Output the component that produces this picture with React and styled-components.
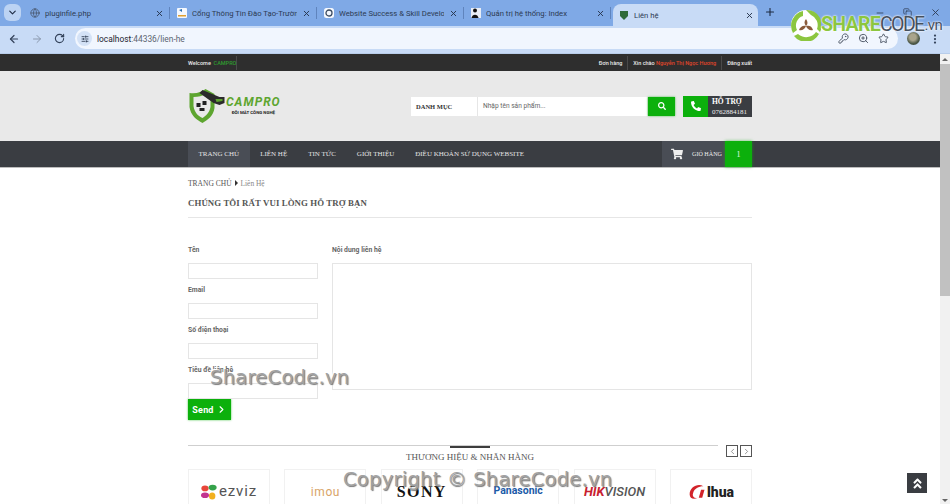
import React from "react";
import styled, { createGlobalStyle } from "styled-components";
import { ChevronDown, X, Plus, Minus, ArrowLeft, ArrowRight, RotateCw, Star, ZoomIn, KeyRound, MoreVertical, Globe, SlidersHorizontal, Copy, ChevronLeft, ChevronRight } from "lucide-react";
import { FaPhoneAlt, FaSearch, FaShoppingCart, FaAngleDoubleUp } from "react-icons/fa";

const GREEN = "#0cb00c";
const DARK = "#3a3d42";
const SERIF = `"Liberation Serif", serif`;
const SANS = `Roboto, "Liberation Sans", sans-serif`;

const Global = createGlobalStyle`
  html, body { margin: 0; padding: 0; height: 504px; overflow: hidden; background: #fff; }
  * { box-sizing: border-box; }
  #root { height: 504px; font-family: ${SANS}; }
`;

// ─── browser chrome ───

const Frame = styled.div`
  position: relative; width: 950px; height: 504px; overflow: hidden;
  display: flex; flex-direction: column;
`;
const TabStrip = styled.div`
  height: 26px; background: #7fa9e6; display: flex; align-items: flex-end;
  padding-left: 4px; flex: none;
`;
const TabMenu = styled.div`
  width: 17px; height: 17px; margin: 0 2px 5px 0; border-radius: 6px; background: #bcd3f3;
  display: flex; align-items: center; justify-content: center; color: #1f2d45; flex: none;
`;
const Tab = styled.div`
  width: ${({ $active }) => ($active ? "145px" : "147px")};
  height: ${({ $active }) => ($active ? "22px" : "26px")};
  margin-left: ${({ $active }) => ($active ? "2px" : "0")};
  padding: ${({ $active }) => ($active ? "0 4px 0 6px" : "0 6px 0 7px")};
  border-radius: 8px 8px 0 0;
  background: ${({ $active }) => ($active ? "#c8dbf6" : "transparent")};
  display: flex; align-items: center; gap: 5px; color: #26354d; flex: none;
  font-size: 7.7px;
`;
const TabTitle = styled.span`
  flex: 1; white-space: nowrap; overflow: hidden; color: #2c3a52;
`;
const TabGap = styled.span`
  width: 1px; height: 12px; margin-bottom: 7px; background: #5f84bd; flex: none; margin-left: -1px;
`;
const Favicon = styled.span`
  width: 10px; height: 10px; flex: none; display: flex; align-items: center; justify-content: center;
  color: #4a5a72;
`;
const NewTab = styled.div`
  margin: 0 0 5px 3px; width: 18px; height: 18px; display: flex; align-items: center; justify-content: center;
  color: #1d2a40;
`;
const WindowButtons = styled.div`
  margin-left: auto; padding: 0 9px 8px 0; display: flex; align-items: center; gap: 18px; color: #2f3d55;
`;
const Toolbar = styled.div`
  height: 28px; flex: none; background: #c8dbf6; border-bottom: 1px solid #b8cdea;
  display: flex; align-items: center; padding: 0 9px 2px 8px; gap: 11px; color: #33425a;
`;
const Address = styled.div`
  width: 823px; flex: none; height: 21px; margin-left: -1px; border-radius: 11px; background: #f1f6fe;
  display: flex; align-items: center; padding: 0 9px 0 2px; font-size: 8.4px; color: #5c6470; gap: 5px;
`;
const SiteInfo = styled.span`
  width: 15px; height: 15px; border-radius: 50%; background: #d4e2f6;
  display: flex; align-items: center; justify-content: center; color: #2f3c52;
`;
const Host = styled.span` color: #1c2431; `;
const AddressActions = styled.div`
  margin-left: auto; display: flex; align-items: center; gap: 9px; color: #46505f;
`;
const Avatar = styled.span`
  width: 13px; height: 13px; border-radius: 50%; flex: none; margin: 0 -2px 0 -2px;
  background: radial-gradient(circle at 45% 40%, #a9a48c 0 30%, #4f5a48 60%, #2d3a33 100%);
`;

// ─── page ───

const Viewport = styled.div`
  flex: 1; display: flex; min-height: 0;
`;
const Page = styled.div`
  width: 940px; flex: none; overflow: hidden; background: #fff;
`;
const Wrap = styled.div`
  width: 564px; margin: 0 auto; display: flex; align-items: center; height: 100%;
`;
const TopBar = styled.div`
  height: 17px; background: #2e2e2e; font-size: 5.5px; font-weight: 500; color: #e8e8e8;
`;
const TopCell = styled.span`
  display: flex; align-items: center; height: 14px; padding: 0 5px;
  border-right: ${({ $sep }) => ($sep ? "1px solid #4a4a4a" : "none")};
  &:first-child { padding-left: 0; }
  &:last-child { padding-right: 0; }
  white-space: pre;
`;
const TopLeft = styled.div` display: flex; align-items: center; `;
const TopRight = styled.div` margin-left: auto; display: flex; align-items: center; `;
const Accent = styled.span` color: ${({ $c }) => $c}; `;

const Header = styled.div`
  height: 70px; background: #e9e9e9;
`;
const LogoBox = styled.div`
  width: 223px; display: flex; align-items: center; gap: 1px;
`;
const LogoText = styled.div` display: flex; flex-direction: column; align-items: center; margin-top: -1px; `;
const LogoName = styled.div`
  font: italic 700 12px/12px ${SANS}; color: #5da52f; letter-spacing: 1px;
`;
const LogoTag = styled.div`
  margin-top: 1px; font: 700 4.4px/7px ${SANS}; color: #222;
`;
const Search = styled.div`
  width: 236px; height: 19px; background: #fff; display: flex; align-items: center;
`;
const SearchCat = styled.div`
  width: 67px; height: 100%; border-right: 1px solid #e6e6e6; padding-left: 5px;
  display: flex; align-items: center; font: 700 6.5px ${SERIF}; color: #333;
`;
const SearchHint = styled.div` padding-left: 5px; font-size: 6.6px; color: #666; `;
const SearchBtn = styled.div`
  width: 27px; height: 19px; margin-left: 1px; background: ${GREEN}; color: #fff;
  box-shadow: 0 0 2px rgba(12,176,12,.7);
  display: flex; align-items: center; justify-content: center;
`;
const Support = styled.div`
  margin-left: 8px; display: flex; height: 21px;
`;
const SupportIcon = styled.div`
  width: 25px; background: ${GREEN}; color: #fff;
  display: flex; align-items: center; justify-content: center;
`;
const SupportText = styled.div`
  width: 44px; background: ${DARK}; padding: 1px 0 0 4px; color: #eee; font-family: ${SERIF};
`;
const SupportTitle = styled.div` font: 700 7.5px/10px ${SERIF}; color: #fff; `;
const SupportPhone = styled.div` font: 7px/10px ${SERIF}; `;

const Nav = styled.div`
  height: 27px; background: ${DARK}; border-bottom: 1px solid #bdbdbd;
`;
const NavItem = styled.div`
  height: 100%; padding: 0 10.5px; display: flex; align-items: center;
  font: 7px ${SERIF}; color: #e4e4e4; white-space: nowrap;
  background: ${({ $active }) => ($active ? "#494d55" : "transparent")};
`;
const Cart = styled.div`
  margin-left: auto; width: 63px; height: 100%; background: #494d55; color: #eee;
  display: flex; align-items: center; padding-left: 9px; gap: 9px;
  font: 6.1px ${SERIF}; white-space: nowrap;
`;
const CartCount = styled.div`
  width: 27px; height: 100%; background: ${GREEN}; color: #e6ffe6;
  box-shadow: 0 0 3px rgba(12,176,12,.6);
  display: flex; align-items: center; justify-content: center; font: 8px ${SERIF};
`;

const Main = styled.div` width: 564px; margin: 0 auto; `;
const Crumbs = styled.div`
  padding-top: 10px; height: 20px; display: flex; align-items: center; gap: 3px;
  font: 7.5px ${SERIF}; color: #555;
`;
const CrumbArrow = styled.span`
  width: 0; height: 0; border-left: 3px solid #333; border-top: 3px solid transparent; border-bottom: 3px solid transparent;
`;
const CrumbNow = styled.span` color: #888; font-size: 7.4px; `;
const Heading = styled.h1`
  margin: 0; padding-top: 8px; height: 30px; border-bottom: 1px solid #e6e6e6;
  font: 700 8.8px/14px ${SERIF}; color: #555; letter-spacing: .1px;
`;
const FormGrid = styled.div`
  margin-top: 21px; display: grid; grid-template-columns: 130px 420px; column-gap: 14px; align-items: start;
`;
const Field = styled.div` display: flex; flex-direction: column; `;
const Label = styled.label`
  height: 24px; padding-top: 7px; font: 700 6.8px/9px ${SANS}; color: #666;
`;
const Input = styled.div`
  height: 16px; background: #fff; border: 1px solid #e5e5e5;
`;
const TextArea = styled.div`
  height: 127px; background: #fff; border: 1px solid #e5e5e5;
`;
const SendBtn = styled.div`
  width: 43px; height: 21px; background: ${GREEN}; color: #fff;
  box-shadow: 0 0 2px rgba(12,176,12,.7);
  display: flex; align-items: center; justify-content: center; gap: 2px;
  font: 700 9px ${SANS}; letter-spacing: .2px;
`;
const BrandHead = styled.div`
  margin-top: 25px; height: 24px; display: grid;
`;
const BrandRule = styled.div`
  grid-area: 1 / 1; display: flex; align-items: flex-start; gap: 8px;
`;
const RuleLine = styled.div` flex: 1; border-top: 1px solid #cfcfcf; `;
const ArrowBtn = styled.div`
  width: 12px; height: 12px; border: 1px solid #555; color: #777; background: #fff;
  display: flex; align-items: center; justify-content: center;
  & + & { margin-left: -6px; }
`;
const BrandTitle = styled.div`
  grid-area: 1 / 1; justify-self: center; display: flex; flex-direction: column; align-items: center;
  font: 9px/11px ${SERIF}; color: #555;
  &::before { content: ""; width: 40px; height: 2px; margin: 1px 0 4px; background: #3d3d3d; }
`;
const BrandRow = styled.div`
  display: grid; grid-template-columns: repeat(6, 82px); justify-content: space-between;
`;
const BrandCard = styled.div`
  height: 44px; border: 1px solid #f1f1f1; background: #fff;
  display: flex; align-items: center; justify-content: center; gap: 2px; padding-top: 1px;
`;
const BrandName = styled.span`
  font-family: ${({ $serif }) => ($serif ? SERIF : SANS)};
  font-size: ${({ $size }) => $size}px;
  font-weight: ${({ $weight }) => $weight || 700};
  font-style: ${({ $italic }) => ($italic ? "italic" : "normal")};
  color: ${({ $color }) => $color};
  letter-spacing: ${({ $track }) => $track || 0}px;
  line-height: 1;
`;

const Scrollbar = styled.div`
  width: 10px; flex: none; background: #f1f1f1; display: flex; flex-direction: column; align-items: center;
`;
const ScrollUp = styled.div`
  margin: 4px 0 3px; width: 0; height: 0;
  border-left: 3px solid transparent; border-right: 3px solid transparent; border-bottom: 3px solid #666;
`;
const ScrollThumb = styled.div` width: 100%; height: 232px; background: #c1c1c1; `;
const ScrollDown = styled.div`
  margin-top: auto; margin-bottom: 2px; width: 0; height: 0;
  border-left: 3px solid transparent; border-right: 3px solid transparent; border-top: 3px solid #666;
`;
const BackTop = styled.div`
  position: absolute; left: 907px; top: 473px; width: 20px; height: 20px; background: ${DARK}; color: #fff;
  display: flex; align-items: center; justify-content: center;
`;

// ─── watermarks ───

const Mark = styled.div`
  position: absolute; left: ${({ $x }) => $x}px; top: ${({ $y }) => $y}px;
  font: 19.5px/24px "DejaVu Sans", sans-serif; color: #a2a2a2; white-space: nowrap; letter-spacing: .25px;
  text-shadow: 1px 1px 1px #777, -1px -1px 0 #fff;
`;
const SiteLogo = styled.div`
  position: absolute; left: 791px; top: 9px; display: flex; align-items: center;
  font: 19.5px/32px ${SANS}; letter-spacing: -.7px; white-space: nowrap;
  text-shadow: 0 0 2px #fff, 0 0 2px #fff;
`;
const LogoShare = styled.span` font-weight: 700; color: #8cc63f; `;
const LogoCode = styled.span` font-weight: 400; color: #46505e; letter-spacing: -1.6px; `;
const LogoVn = styled.span` font-weight: 400; color: #46505e; font-size: 15px; margin-left: 1px; `;

// ─── drawings ───

const ShieldLogo = () => (
  <svg width="37" height="36" viewBox="0 0 36 36">
    <path d="M1 5 C8 6 13 4 17 1 L26 6 L26 20 C25 28 19 32 14 35 C8 32 2 27 1 19 Z" fill="#5da52f" />
    <path d="M5 9 C10 9 14 8 17 6 L22 10 L22 19 C21 25 17 28 14 30 C10 28 6 25 5 18 Z" fill="#e9e9e9" />
    <path d="M11 5 L14 2 L31 9 L36 9 L36 15 L31 17 L25 15 Z" fill="#2b2b2b" />
    <path d="M27 11 L34 11 L34 13 L28 14 Z" fill="#5da52f" />
    <path d="M8 15 h4 v4 h-4z M14 13 h4 v4 h-4z M11 20 h5 v3 h-5z" fill="#222" />
  </svg>
);
const ShareCodeMark = () => (
  <svg width="30" height="32" viewBox="0 0 30 32">
    <circle cx="15" cy="16" r="15" fill="#fff" />
    <path d="M15 1 L20 6 A11 11 0 0 1 26 20 L29 23 A15 15 0 0 0 15 1Z M25 23 A12 12 0 0 1 7 25 L3 27 A15 15 0 0 0 28 25Z M2 24 A15 15 0 0 1 12 2 L12 7 A10 10 0 0 0 6 21Z" fill="#8cc63f" />
    <path d="M15 10 C17 13 17 15 15 17 C13 15 13 12 15 10Z M15 17 C18 16 21 17 22 21 C19 22 16 20 15 17Z M15 17 C14 20 11 22 8 21 C9 18 12 16 15 17Z" fill="#8a5a3a" />
  </svg>
);
const EzvizMark = () => (
  <svg width="16" height="16" viewBox="0 0 20 20">
    <ellipse cx="5" cy="5.5" rx="4.5" ry="3.5" fill="#e8463a" />
    <ellipse cx="14.5" cy="4.5" rx="5" ry="3.5" fill="#35a24a" />
    <ellipse cx="5" cy="14" rx="5" ry="3.5" fill="#c2348f" />
    <ellipse cx="14" cy="15" rx="4" ry="4.5" fill="#f2b01e" />
  </svg>
);
const DahuaMark = () => (
  <svg width="17" height="16" viewBox="0 0 14 14">
    <path d="M13 2 C8 -1 1 3 1 9 C1 13 5 14 8 12 C5 13 3 11 4 8 C5 4 9 2 13 2Z" fill="#d2232a" />
    <path d="M11 5 L9 12 L12 12 L14 5Z" fill="#d2232a" />
  </svg>
);
const SchoolIcon = () => (
  <svg width="10" height="10" viewBox="0 0 10 10">
    <rect width="10" height="10" rx="1" fill="#f4f8fe" />
    <path d="M2 2 L5 1 L5 4 Z" fill="#2a6db0" />
    <path d="M1 7 H9 V8.5 H1Z" fill="#e0a030" />
  </svg>
);
const SkillIcon = () => (
  <svg width="10" height="10" viewBox="0 0 10 10">
    <rect width="10" height="10" rx="2.5" fill="#f4f8fe" />
    <circle cx="5" cy="5" r="3" fill="none" stroke="#3a4a5f" strokeWidth="1.3" />
  </svg>
);
const AdminIcon = () => (
  <svg width="10" height="10" viewBox="0 0 10 10">
    <rect width="10" height="10" fill="#e9eef6" />
    <circle cx="4" cy="2.5" r="2" fill="#111" />
    <path d="M0.5 10 C1 5.5 7 5.5 7.5 10Z" fill="#111" />
  </svg>
);

const tabs = [
  { title: "pluginfile.php", icon: <Globe size={10} /> },
  { title: "Cổng Thông Tin Đào Tạo-Trường", icon: <SchoolIcon /> },
  { title: "Website Success & Skill Develop", icon: <SkillIcon /> },
  { title: "Quản trị hệ thống: Index", icon: <AdminIcon /> },
];

const fields = ["Tên", "Email", "Số điện thoại", "Tiêu đề liên hệ"];

const App = () => (
  <Frame>
    <Global />
    <TabStrip>
      <TabMenu><ChevronDown size={11} strokeWidth={2.5} /></TabMenu>
      {tabs.map((t) => (
        <React.Fragment key={t.title}>
          <Tab>
            <Favicon>{t.icon}</Favicon>
            <TabTitle>{t.title}</TabTitle>
            <X size={9} strokeWidth={2.5} />
          </Tab>
          <TabGap />
        </React.Fragment>
      ))}
      <Tab $active>
        <Favicon><svg width="10" height="10" viewBox="0 0 10 10"><path d="M1 1 L9 1 L9 6 L5 10 L1 6Z" fill="#2f6b3a" /></svg></Favicon>
        <TabTitle>Liên hệ</TabTitle>
        <X size={9} strokeWidth={2.5} />
      </Tab>
      <NewTab><Plus size={12} strokeWidth={2.2} /></NewTab>
      <WindowButtons>
        <Minus size={10} />
        <Copy size={9} />
        <X size={11} />
      </WindowButtons>
    </TabStrip>
    <Toolbar>
      <ArrowLeft size={12} strokeWidth={2.4} />
      <ArrowRight size={12} strokeWidth={2} color="#8a98ad" />
      <RotateCw size={11} strokeWidth={2.4} />
      <Address>
        <SiteInfo><SlidersHorizontal size={8} strokeWidth={2.5} /></SiteInfo>
        <span><Host>localhost</Host>:44336/lien-he</span>
        <AddressActions>
          <KeyRound size={11} />
          <ZoomIn size={11} />
          <Star size={11} />
        </AddressActions>
      </Address>
      <Avatar />
      <MoreVertical size={12} strokeWidth={2.5} />
    </Toolbar>
    <Viewport>
      <Page>
        <TopBar>
          <Wrap>
            <TopLeft>
              <TopCell $sep>Welcome <Accent $c="#2e9c2e"> CAMPRO</Accent></TopCell>
            </TopLeft>
            <TopRight>
              <TopCell $sep>Đơn hàng</TopCell>
              <TopCell $sep>Xin chào <Accent $c="#e0452a">Nguyễn Thị Ngọc Hương</Accent></TopCell>
              <TopCell>Đăng xuất</TopCell>
            </TopRight>
          </Wrap>
        </TopBar>
        <Header>
          <Wrap>
            <LogoBox>
              <ShieldLogo />
              <LogoText>
                <LogoName>CAMPRO</LogoName>
                <LogoTag>ĐÔI MẮT CÔNG NGHỆ</LogoTag>
              </LogoText>
            </LogoBox>
            <Search>
              <SearchCat>DANH MỤC</SearchCat>
              <SearchHint>Nhập tên sản phẩm...</SearchHint>
            </Search>
            <SearchBtn><FaSearch size={8} /></SearchBtn>
            <Support>
              <SupportIcon><FaPhoneAlt size={10} /></SupportIcon>
              <SupportText>
                <SupportTitle>HỖ TRỢ</SupportTitle>
                <SupportPhone>0762884181</SupportPhone>
              </SupportText>
            </Support>
          </Wrap>
        </Header>
        <Nav>
          <Wrap>
            <NavItem $active>TRANG CHỦ</NavItem>
            <NavItem>LIÊN HỆ</NavItem>
            <NavItem>TIN TỨC</NavItem>
            <NavItem>GIỚI THIỆU</NavItem>
            <NavItem>ĐIỀU KHOẢN SỬ DỤNG WEBSITE</NavItem>
            <Cart><FaShoppingCart size={12} />GIỎ HÀNG</Cart>
            <CartCount>1</CartCount>
          </Wrap>
        </Nav>
        <Main>
          <Crumbs>TRANG CHỦ <CrumbArrow /> <CrumbNow>Liên Hệ</CrumbNow></Crumbs>
          <Heading>CHÚNG TÔI RẤT VUI LÒNG HỖ TRỢ BẠN</Heading>
          <FormGrid>
            <div>
              {fields.map((f) => (
                <Field key={f}>
                  <Label>{f}</Label>
                  <Input />
                </Field>
              ))}
              <SendBtn>Send <ChevronRight size={11} strokeWidth={2.5} /></SendBtn>
            </div>
            <Field>
              <Label>Nội dung liên hệ</Label>
              <TextArea />
            </Field>
          </FormGrid>
          <BrandHead>
            <BrandRule>
              <RuleLine />
              <ArrowBtn><ChevronLeft size={9} /></ArrowBtn>
              <ArrowBtn><ChevronRight size={9} /></ArrowBtn>
            </BrandRule>
            <BrandTitle>THƯƠNG HIỆU & NHÃN HÀNG</BrandTitle>
          </BrandHead>
          <BrandRow>
            <BrandCard><EzvizMark /><BrandName $size={15} $weight={400} $color="#555" $track={0.9}>ezviz</BrandName></BrandCard>
            <BrandCard><BrandName $size={12} $weight={400} $color="#d9a468" $track={0.6}>imou</BrandName></BrandCard>
            <BrandCard><BrandName $serif $size={16} $color="#111" $track={1.4}>SONY</BrandName></BrandCard>
            <BrandCard><BrandName $size={10.5} $color="#1c5ba8">Panasonic</BrandName></BrandCard>
            <BrandCard>
              <BrandName $italic $size={13} $color="#c8202f">HIK<BrandName $italic $size={13} $weight={500} $color="#555">VISION</BrandName></BrandName>
            </BrandCard>
            <BrandCard><DahuaMark /><BrandName $size={14} $weight={900} $color="#222">lhua</BrandName></BrandCard>
          </BrandRow>
        </Main>
      </Page>
      <Scrollbar>
        <ScrollUp />
        <ScrollThumb />
        <ScrollDown />
      </Scrollbar>
    </Viewport>
    <BackTop><FaAngleDoubleUp size={13} /></BackTop>
    <SiteLogo>
      <ShareCodeMark />
      <LogoShare>SHARE</LogoShare><LogoCode>CODE</LogoCode><LogoVn>.vn</LogoVn>
    </SiteLogo>
    <Mark $x={210} $y={366}>ShareCode.vn</Mark>
    <Mark $x={343} $y={468}>Copyright © ShareCode.vn</Mark>
  </Frame>
);

export default App;
